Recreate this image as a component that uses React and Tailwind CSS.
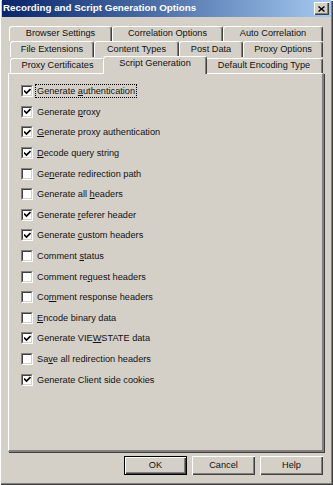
import { useState } from 'react';

const rows = [
  [
    { label: 'Browser Settings', w: 103 },
    { label: 'Correlation Options', w: 111 },
    { label: 'Auto Correlation', w: 100 },
  ],
  [
    { label: 'File Extensions', w: 84 },
    { label: 'Content Types', w: 85 },
    { label: 'Post Data', w: 64 },
    { label: 'Proxy Options', w: 80 },
  ],
];

// [before, accel char, after, checked]
const options = [
  ['Generate ', 'a', 'uthentication', true],
  ['Generate ', 'p', 'roxy', true],
  ['', 'G', 'enerate proxy authentication', true],
  ['', 'D', 'ecode query string', true],
  ['Ge', 'n', 'erate redirection path', false],
  ['Generate all ', 'h', 'eaders', false],
  ['Generate ', 'r', 'eferer header', true],
  ['Generate ', 'c', 'ustom headers', true],
  ['Comment ', 's', 'tatus', false],
  ['Comment re', 'q', 'uest headers', false],
  ['Co', 'm', 'ment response headers', false],
  ['', 'E', 'ncode binary data', false],
  ['Generate VIE', 'W', 'STATE data', true],
  ['Sa', 'v', 'e all redirection headers', false],
  ['Generate Client side cookies', '', '', true],
];

const raised =
  'shadow-[inset_1px_1px_0_#ffffff,inset_-1px_-1px_0_#404040,inset_-2px_-2px_0_#808080]';

function Tab({ label, w }) {
  return (
    <div
      className="h-full flex items-center justify-center rounded-t-[3px] border-t border-l border-white border-r border-r-[#404040] shadow-[inset_-1px_0_0_#808080] bg-[#d4d0c8]"
      style={{ width: w }}
    >
      {label}
    </div>
  );
}

function CheckBox({ checked }) {
  return (
    <div className="w-[12px] h-[12px] shrink-0 bg-white border border-t-[#808080] border-l-[#808080] border-b-white border-r-white">
      <div className="w-full h-full border border-t-[#404040] border-l-[#404040] border-b-[#d4d0c8] border-r-[#d4d0c8] flex items-center justify-center">
        {checked && (
          <svg width="7" height="7" viewBox="0 0 7 7">
            <path d="M0 2.5 L2.5 5 L6.5 1" stroke="#000" strokeWidth="1.6" fill="none" />
          </svg>
        )}
      </div>
    </div>
  );
}

function Button({ label, isDefault }) {
  return (
    <div
      className={`w-[63px] h-[19px] flex items-center justify-center ${
        isDefault
          ? 'border border-black shadow-[inset_1px_1px_0_#ffffff,inset_-1px_-1px_0_#404040,inset_-2px_-2px_0_#808080]'
          : raised
      }`}
    >
      {label}
    </div>
  );
}

export default function App() {
  const [checks, setChecks] = useState(options.map((o) => o[3]));

  return (
    <div
      className={`w-[333px] h-[485px] bg-[#d4d0c8] text-[#111] text-[9.2px] flex flex-col px-[2px] ${raised}`}
      style={{ fontFamily: '"Liberation Sans", Arial, sans-serif' }}
    >
      {/* title bar */}
      <div className="h-[17px] flex items-center justify-between bg-gradient-to-r from-[#0a246a] to-[#a6caf0] pl-[1px] pr-[2px]">
        <span className="text-white font-bold text-[9.8px]">
          Recording and Script Generation Options
        </span>
        <div className={`w-[15px] h-[13px] bg-[#d4d0c8] flex items-center justify-center ${raised}`}>
          <svg width="7" height="6" viewBox="0 0 7 6">
            <path d="M0.5 0.5 L6.5 5.5 M6.5 0.5 L0.5 5.5" stroke="#000" strokeWidth="1.4" />
          </svg>
        </div>
      </div>

      {/* tabs */}
      <div className="mt-[9px] pl-[7px]">
        <div className="flex h-[15px]">
          {rows[0].map((t) => (
            <Tab key={t.label} {...t} />
          ))}
        </div>
        <div className="flex h-[16px] pl-[1px]">
          {rows[1].map((t) => (
            <Tab key={t.label} {...t} />
          ))}
        </div>
        <div className="flex h-[16px] pl-[1px] items-end relative">
          <div className="h-[15px]">
            <Tab label="Proxy Certificates" w={95} />
          </div>
          <div className="relative z-10 h-[18px] -mb-[1px] -mx-[2px] flex items-center justify-center rounded-t-[3px] border-t border-l border-white border-r border-r-[#404040] shadow-[inset_-1px_0_0_#808080] bg-[#d4d0c8] w-[104px] pb-[3px]">
            Script Generation
          </div>
          <div className="h-[15px]">
            <Tab label="Default Encoding Type" w={118} />
          </div>
        </div>
      </div>

      {/* panel */}
      <div className="ml-[6px] mr-[7px] h-[379px] border-t border-l border-white border-r-2 border-b-2 border-r-[#808080] border-b-[#808080] shadow-[1px_1px_0_#404040] pt-[7px] pl-[12px]">
        <div className="flex flex-col">
          {options.map(([a, k, b], i) => (
            <div
              key={i}
              className="h-[20.6px] flex items-center gap-[3px] cursor-default"
              onClick={() => setChecks((c) => c.map((v, j) => (j === i ? !v : v)))}
            >
              <CheckBox checked={checks[i]} />
              <span
                className={`px-[1px] leading-[12px] ${
                  i === 0 ? 'outline outline-1 outline-dotted outline-black' : 'outline outline-1 outline-transparent'
                }`}
              >
                {a}
                {k && <span className="underline underline-offset-[1px]">{k}</span>}
                {b}
              </span>
            </div>
          ))}
        </div>
      </div>

      {/* buttons */}
      <div className="flex justify-end gap-[5px] mt-[4px] pr-[8px]">
        <Button label="OK" isDefault />
        <Button label="Cancel" />
        <Button label="Help" />
      </div>
    </div>
  );
}
